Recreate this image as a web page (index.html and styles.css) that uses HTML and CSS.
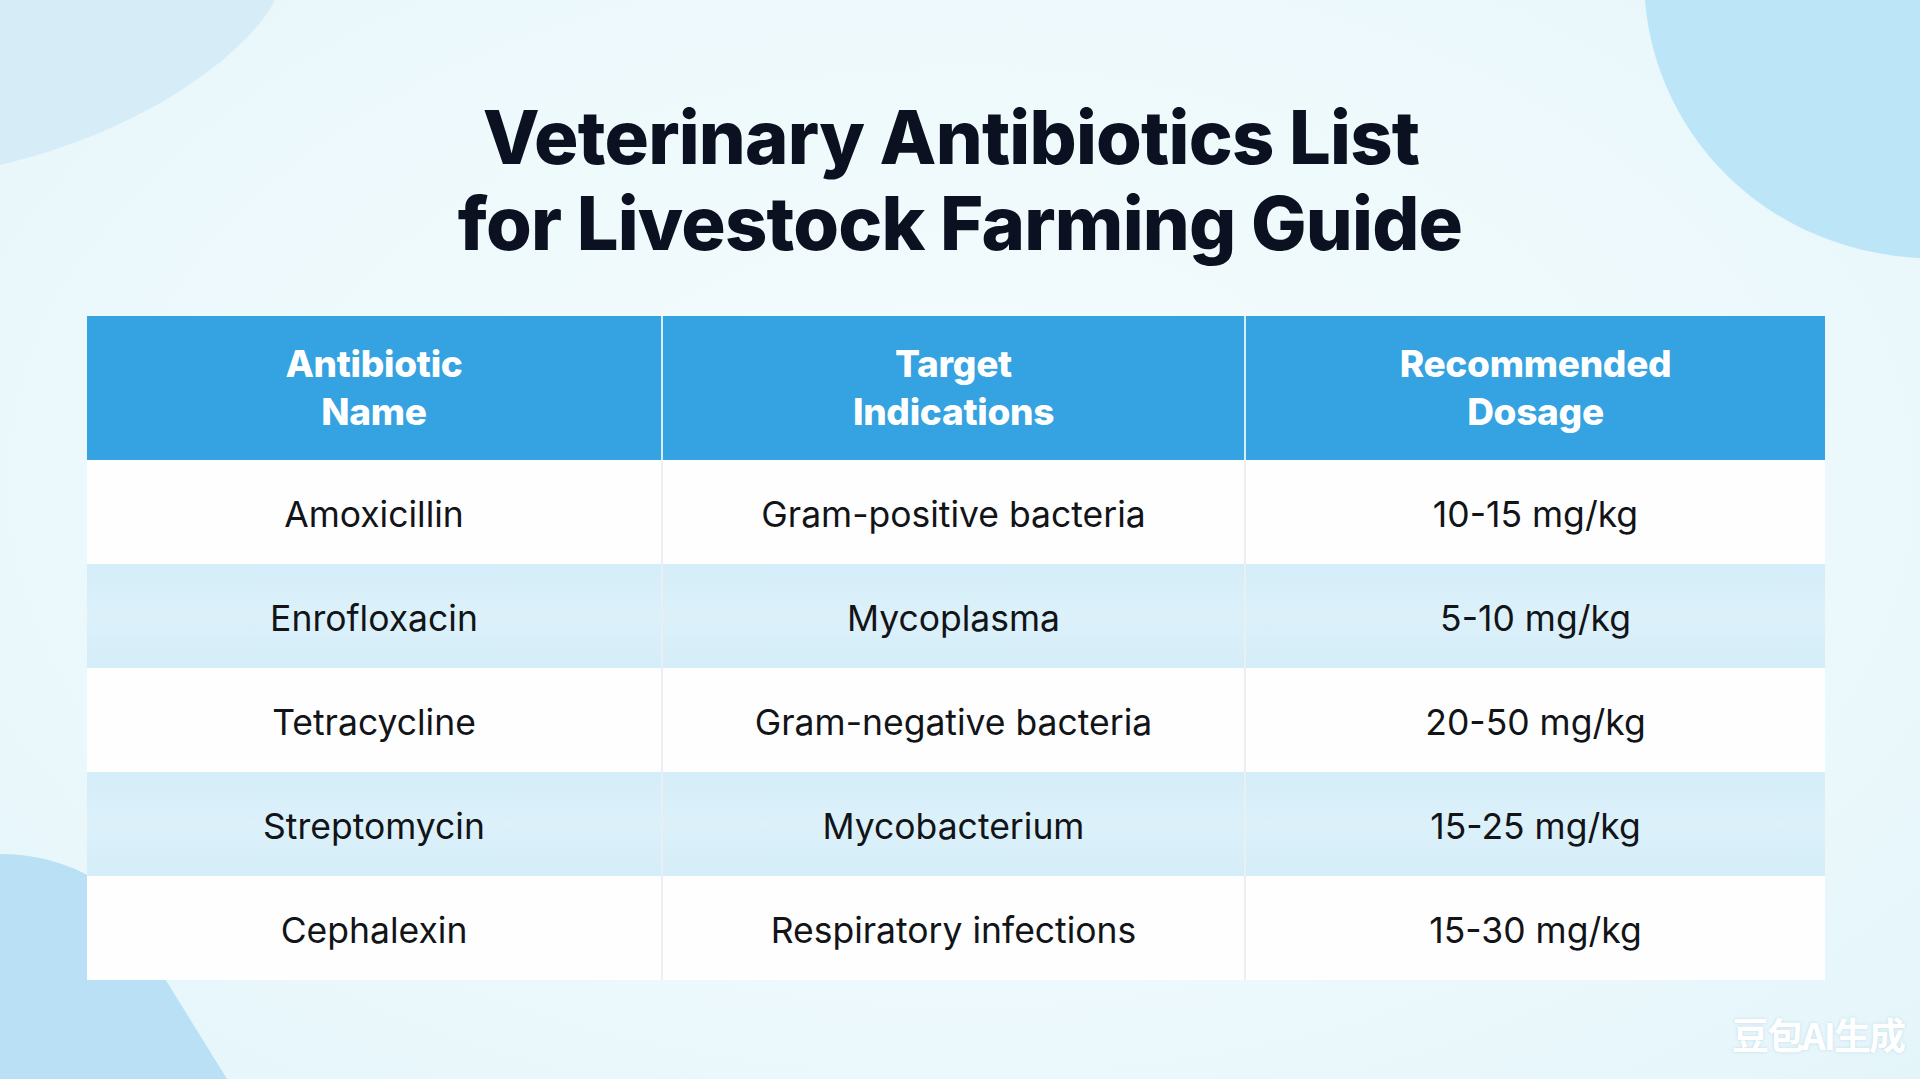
FILE: index.html
```html
<!DOCTYPE html>
<html lang="en">
<head>
<meta charset="utf-8">
<title>Veterinary Antibiotics List</title>
<link rel="stylesheet" href="styles.css">
</head>
<body>
<svg class="backdrop" viewBox="0 0 1920 1079" preserveAspectRatio="none" aria-hidden="true">
  <path class="blob-tl" d="M0 0 L275 0 C250 50 150 130 0 165 Z"/>
  <path class="blob-tr" d="M1645 0 C1655 130 1760 250 1920 258 L1920 0 Z"/>
  <path class="blob-bl" d="M0 854 C40 854 80 866 110 890 L227 1079 L0 1079 Z"/>
</svg>
<main class="page">
  <h1 class="title"><span class="line-one">Veterinary Antibiotics List</span><br>for Livestock Farming Guide</h1>
  <div class="table">
    <div class="cell head">Antibiotic<br>Name</div>
    <div class="cell head">Target<br>Indications</div>
    <div class="cell head">Recommended<br>Dosage</div>

    <div class="cell">Amoxicillin</div>
    <div class="cell">Gram-positive bacteria</div>
    <div class="cell">10-15 mg/kg</div>

    <div class="cell alt">Enrofloxacin</div>
    <div class="cell alt">Mycoplasma</div>
    <div class="cell alt">5-10 mg/kg</div>

    <div class="cell">Tetracycline</div>
    <div class="cell">Gram-negative bacteria</div>
    <div class="cell">20-50 mg/kg</div>

    <div class="cell alt">Streptomycin</div>
    <div class="cell alt">Mycobacterium</div>
    <div class="cell alt">15-25 mg/kg</div>

    <div class="cell">Cephalexin</div>
    <div class="cell">Respiratory infections</div>
    <div class="cell">15-30 mg/kg</div>
  </div>
</main>
<div class="watermark">豆包AI生成</div>
</body>
</html>
```
FILE: styles.css
```css
html, body {
  margin: 0;
  padding: 0;
}
body {
  width: 1920px;
  height: 1079px;
  overflow: hidden;
  position: relative;
  background: radial-gradient(ellipse at 50% 45%, #f4fcfd 0%, #edf9fc 60%, #e4f5fa 100%);
  font-family: "Inter", "Lato", sans-serif;
  color: #111418;
}
.backdrop {
  position: absolute;
  left: 0;
  top: 0;
  width: 1920px;
  height: 1079px;
}
.blob-tl { fill: #d6edf8; }
.blob-tr { fill: #bde5f8; }
.blob-bl { fill: #b9e0f5; }

.page {
  position: relative;
  display: flex;
  flex-direction: column;
  align-items: flex-start;
  padding-top: 94px;
}
.title {
  align-self: center;
  margin: 0 0 50px 0;
  font-family: "Inter", sans-serif;
  font-weight: 800;
  font-size: 74px;
  line-height: 86px;
  letter-spacing: -0.8px;
  text-align: center;
  color: #0b1120;
}
.line-one {
  padding-right: 18px;
}
.table {
  margin-left: 87px;
  width: 1738px;
  display: grid;
  grid-template-columns: 574px 583px 1fr;
  grid-template-rows: 144px repeat(5, 104px);
  background: #fefefe;
}
.cell {
  display: flex;
  align-items: center;
  justify-content: center;
  text-align: center;
  padding-top: 4px;
  font-size: 35.5px;
  color: #121418;
  background: #fefefe;
  border-left: 2px solid #eaeff1;
}
.cell:nth-child(3n+1) {
  border-left: none;
}
.cell.alt {
  background: linear-gradient(180deg, #d4edf8 0%, #dcf1fa 50%, #d4edf8 100%);
}
.cell.head {
  padding-top: 0;
  background: #35a2e1;
  color: #ffffff;
  font-weight: 800;
  font-size: 37px;
  line-height: 48px;
  letter-spacing: -0.3px;
  border-left: 2px solid #d8eef9;
}
.cell.head:first-child {
  border-left: none;
}
.watermark {
  position: absolute;
  right: 16px;
  bottom: 18px;
  font-family: "Noto Sans CJK SC", sans-serif;
  font-weight: 700;
  font-size: 37px;
  letter-spacing: -2px;
  color: #ffffff;
  text-shadow: 0 0 3px rgba(120, 170, 200, 0.35);
}
```
